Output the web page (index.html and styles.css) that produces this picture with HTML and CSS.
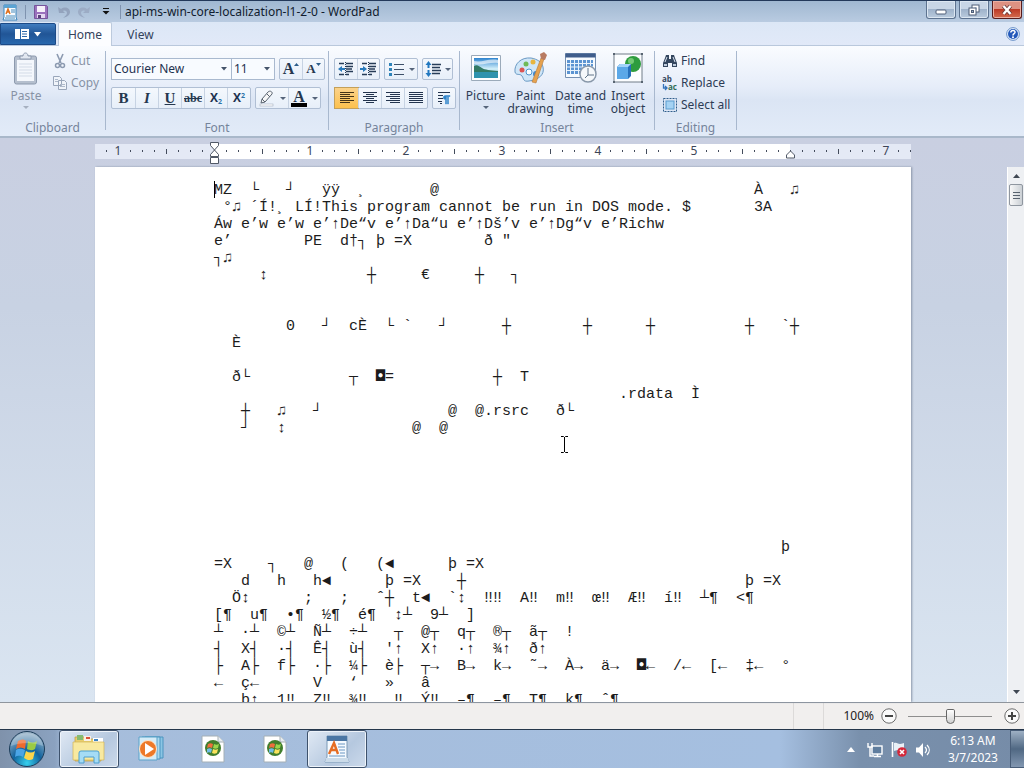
FILE: index.html
```html
<!DOCTYPE html>
<html lang="en">
<head>
<meta charset="utf-8">
<title>api-ms-win-core-localization-l1-2-0 - WordPad</title>
<link rel="stylesheet" href="styles.css">
</head>
<body>
<main class="window">
  <header class="titlebar">
    <div class="quick">
      <svg class="app-icon" width="16" height="18" viewBox="0 0 16 18"><path d="M2 2h12v12l1 3H1l1-3z" fill="#f7fbff" stroke="#3d86bd"/><path d="M2 2h12v3H2z" fill="#5ba4d4"/><path d="M4 11l2-5 2 5M5 9h3" stroke="#e2711d" stroke-width="1.4" fill="none"/><path d="M9 7h4M9 9h4M4 13h9M3 15h10" stroke="#4a8cbb"/></svg>
      <span class="bar"></span>
      <button class="plain" aria-label="Save"><svg width="16" height="16" viewBox="0 0 16 16"><path d="M1.500 1.500h12l1 1v12h-13z" fill="#9b72bd" stroke="#76549b"/><path d="M4 2h8v6H4z" fill="#f5f0fa"/><path d="M4 10h8v4H4z" fill="#e4d8f0"/><path d="M5 11h3v3H5z" fill="#59417b"/></svg></button>
      <button class="plain" aria-label="Undo" disabled><svg width="16" height="16" viewBox="0 0 16 16"><path d="M3 3l1 6h6L8 7c2-1 4 0 4 2s-2 3-4 5c4-1 7-3 7-6 0-4-5-6-9-3z" fill="#93a3bd"/></svg></button>
      <button class="plain" aria-label="Redo" disabled><svg width="16" height="16" viewBox="0 0 16 16"><path d="M13 3l-1 6H6l2-2C6 6 4 7 4 9s2 3 4 5c-4-1-7-3-7-6 0-4 5-6 9-3z" fill="#9cacc5"/></svg></button>
      <button class="plain more" aria-label="Customize toolbar"><svg width="8" height="7" viewBox="0 0 8 7"><path d="M1 .5h6" stroke="#111"/><path d="M0.500 3h7L4 6.500z" fill="#111"/></svg></button>
      <span class="bar"></span>
    </div>
    <h1 class="title">api-ms-win-core-localization-l1-2-0 - WordPad</h1>
    <div class="controls">
      <button aria-label="Minimize"><svg width="12" height="12" viewBox="0 0 12 12"><rect x="1" y="6" width="10" height="4" rx="1" fill="#fff" stroke="#4f5f78"/></svg></button>
      <button aria-label="Restore"><svg width="14" height="12" viewBox="0 0 14 12"><rect x="5" y="1" width="7" height="7" fill="#fff" stroke="#4f5f78"/><rect x="7.500" y="3.500" width="2" height="2" fill="#91a6c1"/><rect x="2" y="4" width="7" height="7" fill="#fff" stroke="#4f5f78"/><rect x="4.500" y="6.500" width="2" height="2" fill="#9db1cb" stroke="#4f5f78"/></svg></button>
      <button class="close" aria-label="Close"><svg width="14" height="12" viewBox="0 0 14 12"><path d="M3.500 2l7 8M10.500 2l-7 8" stroke="#693838" stroke-width="4"/><path d="M3.500 2l7 8M10.500 2l-7 8" stroke="#fff" stroke-width="2.400"/></svg></button>
    </div>
  </header>

  <nav class="tabs">
    <button class="file" aria-label="WordPad menu"><svg width="28" height="12" viewBox="0 0 28 12"><path d="M1 1h14v10H1z" fill="#fff"/><path d="M6.500 1v10M8 3.500h5M8 6h5M8 8.500h5" stroke="#2a66a9"/><path d="M20 4h7l-3.500 4.500z" fill="#fff"/></svg></button>
    <button class="tab active">Home</button>
    <button class="tab">View</button>
    <button class="help" aria-label="Help"><svg width="14" height="14" viewBox="0 0 14 14"><circle cx="7" cy="7" r="6.400" fill="#e6f0fc" stroke="#6d93c8"/><circle cx="7" cy="7" r="5" fill="#2459ba"/><path d="M4.800 5.500C5 2.700 9.400 2.900 9 5.500 8.800 6.800 7 6.700 7 8.500" fill="none" stroke="#fff" stroke-width="1.500"/><circle cx="7" cy="10.300" r="1" fill="#fff"/></svg></button>
  </nav>

  <section class="ribbon">
    <div class="group clipboard">
      <div class="group-body clip-body">
        <button class="big" disabled><svg width="28" height="34" viewBox="0 0 28 34"><rect x="2.500" y="4" width="22" height="28" rx="2" fill="#b5bfce" stroke="#8d9aae"/><path d="M5 8h17v21H5z" fill="#f4f7fc"/><path d="M8 7V4h3c0-4 5-4 5 0h3v3z" fill="#e2e8f1" stroke="#8d9aae"/><path d="M7 12h13M7 15h13M7 18h13M7 21h13M7 24h13" stroke="#d3dbe7"/></svg><span>Paste</span><i class="caret"></i></button>
        <div class="stack">
          <button class="row" disabled><svg width="16" height="16" viewBox="0 0 16 16"><path d="M5 1l4 9M11 1L7 10" stroke="#8c9ab0" stroke-width="1.600" fill="none"/><circle cx="5.500" cy="12.500" r="2" fill="none" stroke="#8c9ab0" stroke-width="1.500"/><circle cx="10.500" cy="12.500" r="2" fill="none" stroke="#8c9ab0" stroke-width="1.500"/></svg>Cut</button>
          <button class="row" disabled><svg width="16" height="16" viewBox="0 0 16 16"><path d="M1.500 1.500h6l2 2v7h-8zM6.500 5.500h6l2 2v7h-8z" fill="#f0f4fa" stroke="#99a6ba"/><path d="M3 4.500h3M3 6.500h3M8 9.500h5M8 11.500h5" stroke="#aeb9ca"/></svg>Copy</button>
        </div>
      </div>
      <h2>Clipboard</h2>
    </div>

    <div class="group font">
      <div class="group-body">
        <div class="line">
          <div class="combos">
            <select class="family" aria-label="Font family"><option>Courier New</option></select>
            <select class="size" aria-label="Font size"><option>11</option></select>
          </div>
          <div class="set">
            <button class="serif grow" aria-label="Grow font">A<svg width="5" height="3" viewBox="0 0 5 3"><path d="M0 3h5L2.500 0z" fill="#2d5e8b"/></svg></button>
            <button class="serif shrink" aria-label="Shrink font">A<svg width="5" height="3" viewBox="0 0 5 3"><path d="M0 0h5L2.500 3z" fill="#2d5e8b"/></svg></button>
          </div>
        </div>
        <div class="line">
          <div class="set six">
            <button class="serif">B</button><button class="serif ital">I</button><button class="serif und">U</button><button class="serif strike">abc</button>
            <button class="sansx" aria-label="Subscript">X<sub>2</sub></button><button class="sansx" aria-label="Superscript">X<sup>2</sup></button>
          </div>
          <div class="set colours">
            <button aria-label="Highlight"><svg width="17" height="17" viewBox="0 0 17 17"><path d="M4 9l6-7c2-2 5 0 4 2l-7 8-4 1z" fill="#f6f7f8" stroke="#59636f"/><path d="M4 9l3 3M9 4l3 3" stroke="#59636f"/><rect x="2" y="14" width="13" height="2" fill="#fff" stroke="#a5b0bf" stroke-width=".6"/></svg><i class="caret"></i></button>
            <button class="serif colour" aria-label="Text color"><span>A</span><i class="caret"></i></button>
          </div>
        </div>
      </div>
      <h2>Font</h2>
    </div>

    <div class="group paragraph">
      <div class="group-body">
        <div class="line">
          <div class="set">
            <button aria-label="Decrease indent"><svg width="18" height="16" viewBox="0 0 18 16"><path d="M2 2.500h5M9 2.500h7M9 5.500h7M9 8h6M9 10.500h7M2 13.500h5M9 13.500h3" stroke="#273d58" stroke-width="1.600"/><path d="M1 8l4-3v2h3v2H5v2z" fill="#287abc"/><path d="M8.500 1v14" stroke="#273d58" stroke-dasharray="1 1"/></svg></button>
            <button aria-label="Increase indent"><svg width="18" height="16" viewBox="0 0 18 16"><path d="M2 2.500h5M9 2.500h7M9 5.500h7M9 8h6M9 10.500h7M2 13.500h5M9 13.500h3" stroke="#273d58" stroke-width="1.600"/><path d="M7 8L3 5v2H0v2h3v2z" fill="#287abc"/><path d="M8.500 1v14" stroke="#273d58" stroke-dasharray="1 1"/></svg></button>
          </div>
          <div class="set"><button class="wide" aria-label="Bullets"><svg width="18" height="16" viewBox="0 0 18 16"><path d="M6 3.500h10M6 8.500h10M6 13.500h10" stroke="#3d5069" stroke-width="1.200"/><path d="M1 2h3v3H1zM1 7h3v3H1zM1 12h3v3H1z" fill="#2e83b9"/></svg><i class="caret"></i></button></div>
          <div class="set"><button class="mid" aria-label="Line spacing"><svg width="17" height="16" viewBox="0 0 17 16"><path d="M7 3.500h9M7 6.500h8M7 9.500h9M7 12.500h8" stroke="#273d58" stroke-width="1.300"/><path d="M3.500 0L6.500 4h-2v8h2l-3 4-3-4h2V4h-2z" fill="#2278c0"/><path d="M0 7h7v2H0z" fill="#f2f6fc"/></svg><i class="caret"></i></button></div>
        </div>
        <div class="line">
          <div class="set four">
            <button class="on" aria-label="Align left"><svg width="16" height="14" viewBox="0 0 16 14"><path d="M1 1.500h14M1 3.500h10M1 5.500h14M1 7.500h10M1 9.500h14M1 11.500h10" stroke="#463417"/></svg></button>
            <button aria-label="Center"><svg width="16" height="14" viewBox="0 0 16 14"><path d="M1 1.500h14M4 3.500h8M1 5.500h14M4 7.500h8M1 9.500h14M4 11.500h8" stroke="#23344e"/></svg></button>
            <button aria-label="Align right"><svg width="16" height="14" viewBox="0 0 16 14"><path d="M1 1.500h14M5 3.500h10M1 5.500h14M5 7.500h10M1 9.500h14M5 11.500h10" stroke="#23344e"/></svg></button>
            <button aria-label="Justify"><svg width="16" height="14" viewBox="0 0 16 14"><path d="M1 1.500h14M1 3.500h14M1 5.500h14M1 7.500h14M1 9.500h14M1 11.500h14" stroke="#23344e"/></svg></button>
          </div>
          <div class="set"><button aria-label="Paragraph"><svg width="16" height="16" viewBox="0 0 16 16"><path d="M2 2.500h12M2 5.500h5M2 8.500h5M2 11.500h4M4 13.500h2" stroke="#23344e"/><path d="M14 5.500H9.500c-3 0-3 4 0 4V14h1V6.500h1V14h1V6.500H14z" fill="#2e83c9" stroke="#2e83c9" stroke-width=".5"/></svg></button></div>
        </div>
      </div>
      <h2>Paragraph</h2>
    </div>

    <div class="group insert">
      <div class="group-body inserts">
        <button class="big"><svg width="32" height="32" viewBox="0 0 32 32"><defs><linearGradient id="sky" x2="0" y2="1"><stop stop-color="#2c83cf"/><stop offset=".55" stop-color="#d4f1fa"/><stop offset="1" stop-color="#2182a8"/></linearGradient></defs><path d="M1.500 3.500h29v25h-29z" fill="#fff" stroke="#9baaba"/><path d="M4 6h24v20H4z" fill="url(#sky)"/><path d="M4 14c3-2 5 0 8 2s8 2 16 3v1H4z" fill="#327a66"/><path d="M4 20h24v6H4z" fill="#2f93ae"/><path d="M4 9c8 2 14-3 24-1v3c-9-1-15 3-24 1z" fill="#fff" opacity=".6"/></svg><span>Picture</span><i class="caret"></i></button>
        <button class="big"><svg width="34" height="32" viewBox="0 0 34 32"><path d="M17 6C7 5 0 12 1 20c1 4 5 1 7 4s1 6 7 5c9-1 16-6 14-14-1-5-6-8-12-9z" fill="#cfe6f8" stroke="#6a99c4"/><circle cx="8" cy="18" r="2.500" fill="#dc5454"/><circle cx="12" cy="12" r="2.500" fill="#6fba58"/><circle cx="19" cy="10" r="2.500" fill="#e7b53e"/><circle cx="15" cy="20" r="3" fill="#fff" stroke="#4c94ce"/><circle cx="22" cy="22" r="3" fill="#4089ce"/><path d="M18 30l9-24 3 1-8 24z" fill="#e6a24e" stroke="#b4783a" stroke-width=".6"/><path d="M27 7l-1-5 4-2 3 3-2 5z" fill="#b87b62"/></svg><span>Paint<br>drawing</span></button>
        <button class="big"><svg width="34" height="32" viewBox="0 0 34 32"><path d="M1.500 1.500h30v24h-30z" fill="#f7fbff" stroke="#7590b2"/><path d="M1.500 1.500h30v4h-30z" fill="#3f5d8c"/><path d="M3 8h26v14H3z" fill="#5c94d2"/><path d="M3 11.500h26M3 15h26M3 18.500h26M6.500 8v14M10.500 8v14M14.500 8v14M18.500 8v14M22.500 8v14M26.500 8v14" stroke="#e9f3fc"/><circle cx="24" cy="22" r="8" fill="#f5f8fb" stroke="#8998aa" stroke-width="1.500"/><path d="M24 16v7h6M24 23l-3 3" stroke="#60758a" fill="none"/></svg><span>Date and<br>time</span></button>
        <button class="big"><svg width="32" height="32" viewBox="0 0 32 32"><path d="M2 2h28v28H2z" fill="#fbfdff" stroke="#717c88"/><circle cx="21" cy="12" r="8" fill="#2d9c3e"/><circle cx="19" cy="9" r="3" fill="#74ca76"/><path d="M5 15l3-3h11v12l-3 3H5z" fill="#2771bc"/><path d="M5 15h11v12H5z" fill="#5ba8e8"/><path d="M5 15l3-3h11l-3 3z" fill="#a3d4fa"/><path d="M1 1h2v2H1zM29 1h2v2h-2zM1 29h2v2H1zM29 29h2v2h-2z" fill="#596572"/></svg><span>Insert<br>object</span></button>
      </div>
      <h2>Insert</h2>
    </div>

    <div class="group editing">
      <div class="group-body stack">
        <button class="row"><svg width="16" height="16" viewBox="0 0 16 16"><path d="M4 2h3v4h2V2h3l1 3 2 5v4h-5v-4H6v4H1v-4l2-5z" fill="#34465e"/><path d="M5 4l-2 5M11 4l2 5" stroke="#d7e1ee"/><path d="M2 11h3v2H2zM11 11h3v2h-3z" fill="#c0cddd"/></svg>Find</button>
        <button class="row"><svg class="swap" width="16" height="16" viewBox="0 0 16 16"><text x="0" y="7" class="rep-a">ab</text><text x="6" y="15" class="rep-b">ac</text><path d="M1.500 9v4h3M3 11l2 2-2 2" fill="none" stroke="#3473ba" stroke-width="1.300"/></svg>Replace</button>
        <button class="row"><svg width="16" height="16" viewBox="0 0 16 16"><rect x="1.500" y="1.500" width="13" height="13" fill="none" stroke="#315f8c" stroke-dasharray="2 1"/><rect x="4" y="4" width="8" height="8" fill="#a4d2f3" stroke="#5a9cce"/></svg>Select all</button>
      </div>
      <h2>Editing</h2>
    </div>
  </section>

  <section class="workspace">
    <div class="canvas">
      <div class="ruler">
        <div class="margin lead"><b>1</b></div>
        <div class="scale"><b>1</b><b>2</b><b>3</b><b>4</b><b>5</b>
          <svg class="indent left" width="11" height="24" viewBox="0 0 11 24"><path d="M1.500 1.500h8v3l-4 4.500 4 4.500v2h-8v-2l4-4.500-4-4.500z" fill="#fff" stroke="#515967"/><path d="M1.500 16.500h8v6h-8z" fill="#fff" stroke="#515967"/></svg>
          <svg class="indent right" width="11" height="9" viewBox="0 0 11 9"><path d="M1.500 8v-3L5.500 1l4 4v3z" fill="#fff" stroke="#515967"/></svg>
        </div>
        <div class="margin trail"><b>7</b></div>
      </div>
      <article class="page">
<pre class="doc" contenteditable="true" spellcheck="false">MZ  └   ┘   ÿÿ  ¸       @                                   À   ♫
 °♫ ´Í!¸ LÍ!This program cannot be run in DOS mode. $       3A
Áw e’w e’w e’↑De“v e’↑Da“u e’↑Dš’v e’↑Dg“v e’Richw
e’        PE  d†┐ þ =X        ð "
┐♫
     ↕           ┼     €     ┼   ┐


        0   ┘  cÈ  └ `   ┘      ┼        ┼      ┼          ┼   `┼
  È

  ð└           ┬  <span class="inverse">◘</span>=           ┼  T
                                             .rdata  Ì
   ┼   ♫   ┘              @  @.rsrc   ð└
   ┘   ↕              @  @






                                                               þ
=X    ┐   @   (   (◄      þ =X
   d   h   h◄      þ =X    ┼                               þ =X
  Ö↕      ;   ;   ˆ┼  t◄  `↕  ‼‼  A‼  m‼  œ‼  Æ‼  í‼  ┴¶  &lt;¶
[¶  u¶  •¶  ½¶  é¶  ↕┴  9┴  ]
┴  ·┴  ©┴  Ñ┴  ÷┴   ┬  @┬  q┬  ®┬  ã┬  !
┤  X┤  ·┤  Ê┤  ù┤  '↑  X↑  ·↑  ¾↑  ð↑
├  A├  f├  ·├  ¼├  è├  ┬→  B→  k→  ˜→  À→  ä→  <span class="inverse">◘</span>←  /←  [←  ‡←  °
←  ç←      V   ‘   »   â
   b↑  1‼  Z‼  ¾‼   ‼  Ý‼  –¶  –¶  T¶  k¶  ˆ¶</pre>
        <span class="text-caret"></span>
        <svg class="pointer" width="9" height="17" viewBox="0 0 9 17"><path d="M1 .5h2.500l1 1 1-1H8M4.500 1v15M1 16.500h2.500l1-1 1 1H8" fill="none" stroke="#000"/></svg>
      </article>
    </div>
    <div class="scroll">
      <button aria-label="Scroll up"><svg width="7" height="5" viewBox="0 0 7 5"><path d="M0 5h7L3.500 1z" fill="#3f4752"/></svg></button>
      <span class="thumb"></span>
      <button class="down" aria-label="Scroll down"><svg width="7" height="5" viewBox="0 0 7 5"><path d="M0 0h7L3.500 4z" fill="#3f4752"/></svg></button>
    </div>
  </section>

  <footer class="status">
    <span class="cell"></span>
    <label for="zoom">100%</label>
    <button class="round" aria-label="Zoom out"><svg width="16" height="16" viewBox="0 0 16 16"><circle cx="8" cy="8" r="7.200" fill="#fafafa" stroke="#6c6c6c"/><path d="M4 8h8" stroke="#444" stroke-width="2"/></svg></button>
    <input id="zoom" type="range" min="0" max="100" value="50">
    <button class="round" aria-label="Zoom in"><svg width="16" height="16" viewBox="0 0 16 16"><circle cx="8" cy="8" r="7.200" fill="#fafafa" stroke="#6c6c6c"/><path d="M4 8h8M8 4v8" stroke="#444" stroke-width="2"/></svg></button>
  </footer>
</main>

<nav class="taskbar">
  <button class="start" aria-label="Start"><svg width="38" height="38" viewBox="0 0 38 38"><defs><radialGradient id="orb" cx=".5" cy=".9" r=".9"><stop stop-color="#35d0ee"/><stop offset=".45" stop-color="#12639d"/><stop offset="1" stop-color="#a8bdce"/></radialGradient></defs><circle cx="19" cy="19" r="17.500" fill="url(#orb)" stroke="#1c3c59"/><path d="M10 11c3-2 6-2 8 0l-1 8c-3-2-6-2-9 0z" fill="#ee6a2c"/><path d="M20 11c3 2 6 2 9 0l-2 8c-3 2-6 1-8 0z" fill="#9acb44"/><path d="M8 20c3-2 6-1 9 0l-2 7c-2-1-5-2-8 0z" fill="#4ba5e6"/><path d="M18 21c3 2 6 2 9 0l-2 8c-3 2-6 1-9-1z" fill="#fcd64b"/><path d="M3 16C5 -1 33 -1 35 16 25 12 13 12 3 16z" fill="#fff" opacity=".25"/></svg></button>
  <div class="tasks">
    <button class="task open" aria-label="Windows Explorer"><svg width="36" height="32" viewBox="0 0 36 32"><path d="M4 4h9l2 2h15v22H4z" fill="#e9ce6d" stroke="#be9c40" stroke-width=".7"/><path d="M6 2h6v5H6z" fill="#86bb71"/><path d="M13 3h7v5h-7z" fill="#f8f0e5"/><path d="M15 4h4v2h-4z" fill="#d95039"/><path d="M22 5h10v6H22z" fill="#fff"/><path d="M23 6h4v2h-4z" fill="#3c83c5"/><path d="M2 9h31v18H2z" fill="#f8e9a0" stroke="#d2b658" stroke-width=".7"/><path d="M8 30V20q0-2 2-2h16q2 0 2 2v10h-5v-6H13v6z" fill="#a5dcf5" stroke="#4c9fd0"/></svg></button>
    <button class="task" aria-label="Windows Media Player"><svg width="28" height="28" viewBox="0 0 28 28"><path d="M8 2h18v21H8z" fill="#8bc5e4" stroke="#4b94bf"/><path d="M5 2h18v22H5z" fill="#abd9ee" stroke="#4b94bf"/><path d="M2 2h18v23H2z" fill="#d5ecf7" stroke="#5ba2c9"/><circle cx="11" cy="14" r="8.500" fill="#ed7928" stroke="#ffe5c9"/><path d="M8 8l9 6-9 6z" fill="#fff"/></svg></button>
    <button class="task" aria-label="Application"><svg width="24" height="28" viewBox="0 0 24 28"><path d="M1 1h16l6 6v20H1z" fill="#fff" stroke="#a4afb6"/><path d="M17 1v6h6" fill="#e8edf0" stroke="#a4afb6"/><circle cx="12" cy="13" r="8" fill="#417e2d"/><path d="M7 9c2-1 3-1 5 0l-1 4c-2-1-3-1-5 0z" fill="#ef6e3d"/><path d="M13 9c2 1 3 1 5 0l-1 4c-2 1-3 1-5 0z" fill="#9bd54c"/><path d="M6 14c2-1 3-1 5 0l-1 4c-1-1-3-1-4 0z" fill="#70bce5"/><path d="M12 14c2 1 3 1 5 0l-1 4c-2 1-3 1-5 0z" fill="#fae35c"/></svg></button>
    <button class="task" aria-label="Application"><svg width="24" height="28" viewBox="0 0 24 28"><path d="M1 1h16l6 6v20H1z" fill="#fff" stroke="#a4afb6"/><path d="M17 1v6h6" fill="#e8edf0" stroke="#a4afb6"/><circle cx="12" cy="13" r="8" fill="#417e2d"/><path d="M7 9c2-1 3-1 5 0l-1 4c-2-1-3-1-5 0z" fill="#ef6e3d"/><path d="M13 9c2 1 3 1 5 0l-1 4c-2 1-3 1-5 0z" fill="#9bd54c"/><path d="M6 14c2-1 3-1 5 0l-1 4c-1-1-3-1-4 0z" fill="#70bce5"/><path d="M12 14c2 1 3 1 5 0l-1 4c-2 1-3 1-5 0z" fill="#fae35c"/></svg></button>
    <button class="task open" aria-label="WordPad"><svg width="28" height="30" viewBox="0 0 28 30"><path d="M4 2h20v21l2 5H2l2-5z" fill="#f5faff" stroke="#7b99b6"/><path d="M4 2h20v5H4z" fill="#4a76a4"/><path d="M3 24h22l1 4H2z" fill="#cbdbe9"/><path d="M6 20l5-11 4 11M8 16h6" fill="none" stroke="#e56d24" stroke-width="2.400"/><path d="M15 10h7M15 13h7M16 16h6M17 19h5M6 22h16" stroke="#6a96c2"/></svg></button>
  </div>
  <div class="tray">
    <svg width="8" height="5" viewBox="0 0 8 5"><path d="M0 5h8L4 0z" fill="#fff"/></svg>
    <svg width="16" height="16" viewBox="0 0 16 16"><rect x="5" y="4" width="10" height="8" fill="#5f7d9e" stroke="#fff" stroke-width="1.400"/><path d="M7 14.500h7M10.500 12v3" stroke="#fff" stroke-width="1.500"/><path d="M1 1v4h4V1M3 5v9h4" fill="none" stroke="#fff" stroke-width="1.400"/></svg>
    <svg width="16" height="17" viewBox="0 0 16 17"><path d="M1.500 1v15" stroke="#fff" stroke-width="1.600"/><path d="M3 2c3-1 4 1 6 1s3-1 4-1v8c-3 1-4-1-6-1s-3 1-4 1z" fill="#e9f0f6"/><circle cx="11" cy="11" r="4.800" fill="#d4283a"/><path d="M9 9l4 4M13 9l-4 4" stroke="#fff" stroke-width="1.600"/></svg>
    <svg width="16" height="16" viewBox="0 0 16 16"><path d="M1 5.500h3L8 1v14l-4-4.500H1z" fill="#fff"/><path d="M10 5c2 2 2 4 0 6M12 3c3 3 3 7 0 10" fill="none" stroke="#fff" stroke-width="1.200"/></svg>
  </div>
  <div class="clock"><time>6:13 AM</time><time>3/7/2023</time></div>
  <button class="desktop" aria-label="Show desktop"></button>
</nav>
</body>
</html>
```
FILE: styles.css
```css
* { box-sizing: border-box; }
body {
  margin: 0;
  height: 100vh;
  display: flex;
  flex-direction: column;
  overflow: hidden;
  font: 12px/14px "Noto Sans", "Open Sans", sans-serif;
  color: #1e3250;
}
button, select, input { font: inherit; color: inherit; margin: 0; }
button { padding: 0; border: 0; background: none; display: flex; align-items: center; justify-content: center; }
svg { display: block; flex: none; }
h1, h2 { margin: 0; font-size: 12px; font-weight: 400; }

.window { flex: 1; min-height: 0; display: flex; flex-direction: column; }

.titlebar {
  flex: none;
  height: 22px;
  display: flex;
  align-items: center;
  border-top: 1px solid #23395a;
  background: linear-gradient(#a0b8d1, #b9cbe1);
}
.quick { display: flex; align-items: center; gap: 6px; padding-left: 2px; }
.quick .bar { width: 1px; height: 14px; background: #7f93af; margin: 0 1px; }
.quick .more { margin: 0 3px; }
.title { flex: 1; padding-left: 3px; color: #101c2e; }
.controls { display: flex; gap: 3px; align-self: flex-start; padding-right: 2px; }
.controls button {
  width: 30px;
  height: 18px;
  border: 1px solid #5d7390;
  border-top: 0;
  border-radius: 0 0 3px 3px;
  background: linear-gradient(#c8d6e6 50%, #9fb3cb 50%, #bacbdd);
  box-shadow: inset 0 0 0 1px #dce7f2;
}
.controls .close { border-color: #571c1c; background: linear-gradient(#dd9182 50%, #bd3a26 50%, #d46c4f); box-shadow: inset 0 0 0 1px #ebb0a3; }

.tabs { flex: none; height: 24px; display: flex; align-items: flex-end; background: linear-gradient(#dce7f6, #e1e9f8); border-bottom: 1px solid #b9c8dc; }
.file { width: 56px; height: 22px; border: 1px solid #1c4a87; border-radius: 0 2px 0 0; background: linear-gradient(#3f7cbf, #215596 50%, #2968ad); }
.tab { height: 22px; width: 57px; padding-top: 1px; color: #34435c; }
.tab.active { margin: 0 0 -1px 2px; height: 24px; width: 54px; border: 1px solid #bccadd; border-bottom: 0; border-radius: 2px 2px 0 0; background: #fcfdff; }
.help { margin: 0 4px 4px auto; }

.ribbon { flex: none; height: 92px; display: flex; border-bottom: 2px solid #a9b8ca; background: linear-gradient(#fafcff, #e6edf9 45%, #dbe5f4 60%, #e2ebf8); }
.group { display: flex; flex-direction: column; padding-top: 6px; border-style: solid; border-width: 0 1px 0 0; border-image: linear-gradient(transparent 6px, #a8b8ce 6px, #a8b8ce 83px, transparent 83px) 1; padding-left: 5px; }
.group-body { flex: 1; display: flex; flex-direction: column; gap: 7px; padding-top: 6px; }
.group h2 { text-align: center; color: #75849b; padding-right: 5px; height: 15px; }
.clipboard { width: 106px; }
.font { width: 223px; }
.paragraph { width: 131px; }
.insert { width: 195px; }
.editing { width: 82px; }
.clip-body { flex-direction: row; gap: 5px; padding-top: 0; }
.big { flex-direction: column; justify-content: flex-start; line-height: 13px; color: #2d3c55; }
.big:disabled, .row:disabled { color: #8792a5; }
.clip-body .big { width: 42px; }
.clip-body .big svg { margin-bottom: 3px; }
.stack { display: flex; flex-direction: column; gap: 6px; padding-top: 1px; }
.group-body.stack { padding: 1px 0 0 2px; }
.row { gap: 3px; height: 16px; justify-content: flex-start; color: #2d3c55; white-space: nowrap; }
.caret { width: 0; height: 0; border: 3px solid transparent; border-top-color: #55647a; border-bottom: 0; }
.big .caret { margin-top: 4px; }
.big:disabled .caret { border-top-color: #a6b0c0; }

.line { display: flex; gap: 4px; }
.combos { display: flex; }
select {
  appearance: none;
  height: 22px;
  border: 1px solid #a9b9cf;
  border-radius: 0;
  padding: 0 2px;
  background: url("data:image/svg+xml,%3Csvg xmlns='http://www.w3.org/2000/svg' width='6' height='4'%3E%3Cpath d='M0 0h6L3 3.500z' fill='%2345546a'/%3E%3C/svg%3E") no-repeat right 4px center #f8fbff;
}
.family { width: 121px; }
.size { width: 43px; border-left: 0; }
.set { display: flex; border: 1px solid #b0bfd4; border-radius: 2px; background: linear-gradient(#f4f8fd, #e7eff9); }
.set button { width: 22px; height: 20px; gap: 2px; }
.set button + button { border-left: 1px solid #c7d3e3; }
.set.six button, .set.four button { width: 23px; }
.set.colours button { width: 32px; gap: 5px; }
.set .wide { width: 32px; gap: 3px; }
.set .mid { width: 29px; gap: 3px; }
.set .on { background: linear-gradient(#fbd28a, #fdc14d); box-shadow: 0 0 0 1px #c4a05a; }
.serif { font: bold 15px/16px "Liberation Serif", serif; color: #26384f; }
.serif svg { align-self: flex-start; margin-top: 4px; }
.set .grow, .set .shrink { gap: 0; }
.grow { font-size: 16px; }
.shrink { font-size: 13px; }
.ital { font-style: italic; }
.und { text-decoration: underline; }
.strike { font-size: 12px; text-decoration: line-through; }
.set .sansx { gap: 0; font: bold 12px/14px "Open Sans", sans-serif; }
.sansx sub, .sansx sup { font-size: 7px; line-height: 7px; color: #2e72a9; }
.sansx sub { align-self: flex-end; margin-bottom: 3px; }
.sansx sup { align-self: flex-start; margin-top: 4px; }
.colour span { width: 16px; height: 17px; border-bottom: 4px solid #000; line-height: 13px; font-size: 16px; }

.inserts { flex-direction: row; gap: 0; padding: 0; margin-left: -2px; }
.inserts .big { width: 45px; }
.inserts .big svg { margin-bottom: 5px; }
.inserts .big:nth-child(3) { width: 55px; }
.inserts .big:nth-child(4) { width: 40px; }
.swap { overflow: visible; }
.rep-a, .rep-b { font: bold 8px "Open Sans", sans-serif; fill: #37495f; }
.rep-b { fill: #326d56; }

.workspace { flex: 1; min-height: 0; display: flex; background: linear-gradient(#c9cfe1, #c8d2e3 30%, #dae5f1); }
.canvas { flex: 1; min-width: 0; display: flex; flex-direction: column; align-items: center; padding-top: 6px; }
.ruler { flex: none; width: 816px; height: 15px; display: flex; margin-bottom: 8px; }
.margin, .scale {
  display: flex;
  gap: 84px;
  background: url("data:image/svg+xml,%3Csvg xmlns='http://www.w3.org/2000/svg' width='96' height='15'%3E%3Cpath d='M0 6h1v2h-1zM12 6h1v2h-1zM24 6h1v2h-1zM36 6h1v2h-1zM48 5h1v5h-1zM60 6h1v2h-1zM72 6h1v2h-1zM84 6h1v2h-1z' fill='%23444c5c'/%3E%3C/svg%3E") repeat-x #e4e9f5;
}
.lead { width: 119px; padding-left: 17px; background-position-x: 23px; }
.scale { width: 576px; padding-left: 90px; background-color: #fff; position: relative; z-index: 1; }
.trail { flex: 1; padding-left: 90px; }
.ruler b { width: 12px; line-height: 14px; font-weight: 400; text-align: center; color: #3c4557; background: #fff; }
.margin b { background: #e4e9f5; }
.indent { position: absolute; }
.indent.left { left: -5px; top: -3px; }
.indent.right { right: -6px; top: 6px; }

.page { flex: 1; min-height: 0; width: 816px; position: relative; overflow: hidden; background: #fff; box-shadow: 1px 0 2px #8995a8; }
.doc { margin: 0; padding: 15px 0 0 119px; outline: 0; font: 15px/17px "Liberation Mono", monospace; color: #1c1c1c; }
.inverse { font-family: "DejaVu Sans Mono", monospace; line-height: 1px; }
.text-caret { position: absolute; left: 119px; top: 14px; width: 1px; height: 17px; background: #000; }
.pointer { position: absolute; left: 465px; top: 269px; }

.scroll { flex: none; align-self: stretch; width: 17px; margin-top: 29px; padding-bottom: 1px; display: flex; flex-direction: column; align-items: center; border-left: 1px solid #fff; background: #eef0f3; }
.scroll button { width: 15px; height: 17px; }
.scroll .down { margin-top: auto; }
.thumb { width: 14px; height: 22px; border: 1px solid #8f969f; border-radius: 2px; background: repeating-linear-gradient(#58626e 0 1px, transparent 1px 3px) center / 7px 7px no-repeat, linear-gradient(90deg, #f8f8f8, #cbd0d5); }
.canvas { padding-right: 1px; }

.status { flex: none; height: 27px; display: flex; align-items: center; justify-content: flex-end; gap: 7px; padding-right: 4px; border-top: 1px solid #8f959d; background: #f1efee; color: #222; }
.status .cell { align-self: stretch; width: 31px; margin-right: 12px; border: 1px solid #dcdad9; border-width: 0 1px; }
.status input { appearance: none; width: 84px; height: 18px; margin: 0 5px 0 4px; background: linear-gradient(#8e8e8e, #8e8e8e) center / 100% 1px no-repeat; }
.status input::-webkit-slider-thumb { appearance: none; width: 9px; height: 15px; border: 1px solid #666; border-radius: 2px 2px 5px 5px; background: linear-gradient(#fff, #d0d0d0); }

.taskbar { flex: none; height: 39px; display: flex; align-items: stretch; border-top: 1px solid #25364b; background: linear-gradient(90deg, #7f92ab, #8ba2c0 55px, #a6bddb 66px, #a5bfe0 780px, #7990ac 860px, #768ca8); }
.start { width: 54px; }
.tasks { flex: 1; display: flex; gap: 2px; padding-left: 5px; }
.task { width: 60px; }
.task.open { border: 1px solid #3e526c; border-radius: 3px; background: linear-gradient(135deg, #e0e9f4, #b5c8df 60%, #ccdaeb); box-shadow: inset 0 0 0 1px #edf3fa; }
.tray { display: flex; align-items: center; gap: 8px; padding: 1px 17px 0 0; }
.tray svg:first-child { margin-right: 4px; }
.clock { display: flex; flex-direction: column; align-items: center; justify-content: center; color: #fff; line-height: 17px; padding: 0 12px 1px 0; }
.desktop { width: 14px; border: 1px solid #485d78; border-right: 0; background: linear-gradient(#9eb0c4, #506883 50%, #8297b1); }
```
